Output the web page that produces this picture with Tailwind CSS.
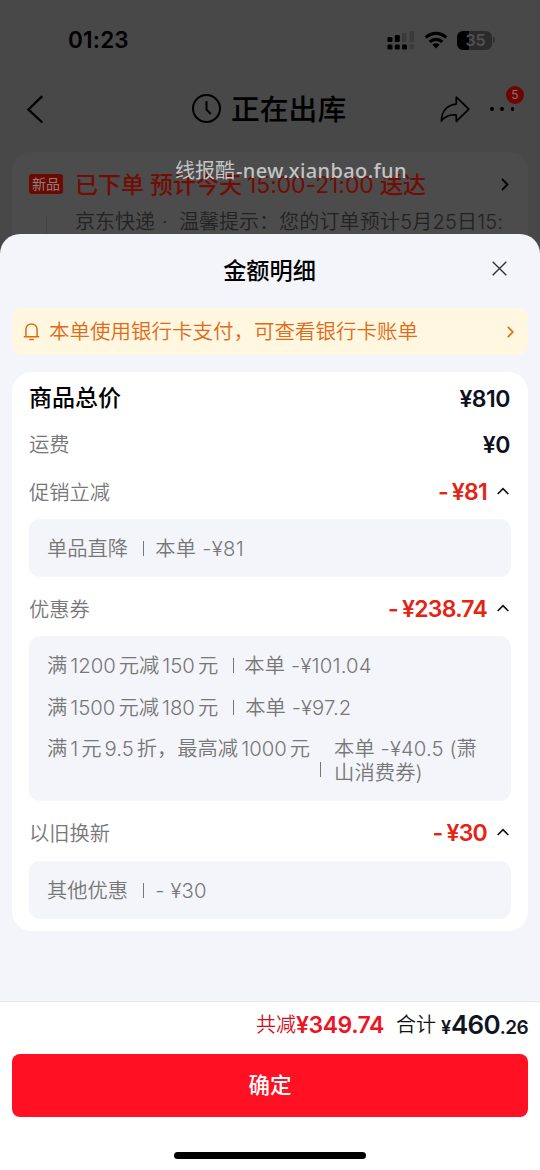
<!DOCTYPE html>
<html lang="zh-CN">
<head>
<meta charset="utf-8">
<title>金额明细</title>
<script src="https://cdn.jsdelivr.net/npm/@tailwindcss/browser@4"></script>
</head>
<body class="relative flex h-[1170px] w-[540px] flex-col overflow-hidden bg-[#484848] font-['Inter','Noto_Sans_CJK_SC',sans-serif] text-black">

<!-- Dimmed order page -->
<div class="h-[234px] shrink-0">
  <div class="flex h-20 items-center pl-[68px] pr-[45px]">
    <span class="pt-px text-[22.500px] font-semibold leading-none tracking-[0.2px]">01:23</span>
    <svg class="ml-auto h-[20px] w-[28px]" viewBox="0 0 28 20">
      <g fill="#000"><rect x="0.500" y="7" width="5" height="5" rx="1.300"/><rect x="7.800" y="5" width="5" height="7" rx="1.300"/><rect x="0.500" y="14.500" width="5" height="5" rx="1.300"/><rect x="7.800" y="14.500" width="5" height="5" rx="1.300"/><rect x="15" y="14.500" width="5" height="5" rx="1.300"/></g>
      <g fill="#3a3a3a"><rect x="15" y="3" width="4.500" height="9" rx="1.300"/><rect x="22.500" y="1" width="4.500" height="11" rx="1.300"/><rect x="22.500" y="14.500" width="4.500" height="5" rx="1.300"/></g>
    </svg>
    <svg class="ml-[9px] h-[18px] w-[24px]" viewBox="0 0 24 18" fill="none" stroke="#000" stroke-width="3.200">
      <path d="M1.800 6.600a14.600 14.600 0 0 1 20.400 0"/><path d="M5.700 10.900a9 9 0 0 1 12.600 0"/><path d="M12 17.400l-3.600-3.600a5.200 5.200 0 0 1 7.200 0z" fill="#000" stroke="none"/>
    </svg>
    <div class="ml-[9px] flex h-[19px] w-[35px] items-center justify-center rounded-[6px] bg-linear-to-r from-black from-35% to-[#2b2b2b] to-35% pl-[2px] text-[16px] font-semibold leading-none text-[#505050]">35</div>
    <div class="ml-px h-[6px] w-[2px] rounded-r bg-[#303030]"></div>
  </div>
  <div class="flex h-[72px] items-start">
    <svg class="ml-[26px] mt-[15px] h-[29px] w-[18px]" viewBox="0 0 18 29" fill="none" stroke="#000" stroke-width="2.400"><path d="M16.300 1.200 2.500 14.500l13.800 13"/></svg>
    <svg class="ml-[147px] mt-[13px] h-[31px] w-[31px]" viewBox="0 0 31 31" fill="none" stroke="#000" stroke-width="2"><circle cx="15.500" cy="15.500" r="13.500"/><path d="M15.500 8v8.500l4.300 4.500"/></svg>
    <span class="ml-[9px] mt-[10px] w-[115px] whitespace-nowrap text-[28.800px] font-medium leading-[40px]">正在出库</span>
    <svg class="ml-[94px] mt-[16px] h-[27px] w-[30px]" viewBox="0 0 30 27" fill="none" stroke="#000" stroke-width="1.700" stroke-linejoin="round"><path d="M16.300 1.200 28.800 13.200 16.300 25.300v-6.400C9.500 18.300 4.500 20.500 1.400 25c.2-9.500 5.500-16 14.900-16.900z"/></svg>
    <div class="relative ml-[20px] mt-[27px] flex gap-[6.500px]">
      <i class="size-[3.800px] rounded-full bg-black"></i><i class="size-[3.800px] rounded-full bg-black"></i><i class="size-[3.800px] rounded-full bg-black"></i>
      <b class="absolute -top-[21px] left-[16px] flex size-[18px] items-center justify-center rounded-full bg-[#700400] text-[12px] font-normal leading-none text-[#8b7070]">5</b>
    </div>
  </div>
  <div class="relative mx-3 h-[90px] rounded-t-[18px] bg-[#4c4c4c]">
    <div class="flex h-[64px] items-center pl-[17px] pr-[19px]">
      <span class="flex h-[20px] w-[34px] items-center justify-center rounded-[3px] bg-[#6d0a03] text-[14px] leading-none text-[#8d7f7e]">新品</span>
      <span class="ml-[12px] flex whitespace-nowrap pt-[2px] text-[23px] font-medium leading-none text-[#720c05]"><span class="w-[75px]">已下单</span><span class="w-[97px]">预计今天</span><span class="w-[133px] font-normal tracking-[-0.100px]">15:00-21:00</span><span>送达</span></span>
      <svg class="ml-auto h-[13px] w-[8px]" viewBox="0 0 8 13" fill="none" stroke="#000" stroke-width="1.900"><path d="M1 1l5.500 5.500L1 12"/></svg>
    </div>
    <div class="ml-[34px] flex h-[26px] items-start border-l border-[#434343] pl-[28px]"><span class="-mt-[6px] flex whitespace-nowrap text-[20px] font-[350] leading-[24px] text-[#222]"><span class="w-[87px]">京东快递</span><span class="w-[17px]">·</span><span class="w-[100px]">温馨提示：</span><span class="tracking-[0.200px]">您的订单预计5月25日15:</span></span></div>
  </div>
</div>

<!-- Price detail sheet -->
<main class="relative flex h-[936px] flex-col rounded-t-[20px] bg-[#f4f5fa]">
  <div class="flex h-[74px] items-center justify-center"><h1 class="-ml-px whitespace-nowrap text-[23.200px] font-medium">金额明细</h1></div>
  <svg class="absolute left-[492px] top-[27px] size-[15px]" viewBox="0 0 15 15" fill="none" stroke="#333" stroke-width="1.400"><path d="M.7.700l13.600 13.600M14.300.700.700 14.300"/></svg>

  <div class="mx-3 flex h-[47px] items-center rounded-[9px] bg-[#fff7df] pl-[11px] pr-[14px] text-[#df6a18]">
    <svg class="h-[19px] w-[17px]" viewBox="0 0 17 19" fill="none" stroke="currentColor" stroke-width="1.500"><path d="M.8 14.700h15.400M2.900 14.700V7.500a5.600 5.600 0 0 1 11.200 0v7.200M6.200 17.600h4.600"/></svg>
    <span class="ml-[9px] whitespace-nowrap pt-[2px] text-[20.500px] font-[350] leading-none">本单使用银行卡支付，可查看银行卡账单</span>
    <svg class="ml-auto h-[12px] w-[7px]" viewBox="0 0 7 12" fill="none" stroke="currentColor" stroke-width="1.700"><path d="M.8.800l5 5.200-5 5.200"/></svg>
  </div>

  <section class="mx-3 mt-[17px] h-[559px] rounded-[20px] bg-white px-[17px] pt-[3px] text-[20.300px] font-[350] leading-none text-[#777]">
    <div class="flex h-[46px] items-center justify-between pt-px text-black"><span class="text-[23px] font-medium">商品总价</span><span class="pr-px pt-px text-[23px] font-semibold tracking-[-0.500px] text-[#0d1020]">¥810</span></div>
    <div class="flex h-[47px] items-center justify-between pt-[2px]"><span>运费</span><span class="pr-px text-[23px] font-semibold tracking-[-0.500px] text-[#0d1020]">¥0</span></div>
    <div class="flex h-[48px] items-center pt-[2px]"><span>促销立减</span><span class="-mt-px ml-auto mr-[10px] text-[23px] font-semibold tracking-[-0.750px] text-[#e62213]"><span class="mr-1">-</span>¥81</span><svg class="-mt-1 mr-[2px] h-[8px] w-[12px]" viewBox="0 0 12 8" fill="none" stroke="#111" stroke-width="1.700"><path d="M.7 7 6 1.600 11.300 7"/></svg></div>
    <div class="mt-[3px] flex h-[58px] items-center rounded-[11px] bg-[#f4f5fa] pl-[18px]"><span class="pt-[2px]">单品直降</span><i class="ml-[15px] mr-[11px] h-[15px] w-px bg-[#777]"></i><span class="pt-[2px] tracking-[0.300px]">本单 -¥81</span></div>
    <div class="flex h-[59px] items-center pt-[7px]"><span>优惠券</span><span class="-mt-px ml-auto mr-[10px] text-[23px] font-semibold tracking-[-0.750px] text-[#e62213]"><span class="mr-1">-</span>¥238.74</span><svg class="-mt-1 mr-[2px] h-[8px] w-[12px]" viewBox="0 0 12 8" fill="none" stroke="#111" stroke-width="1.700"><path d="M.7 7 6 1.600 11.300 7"/></svg></div>
    <div class="h-[165px] rounded-[11px] bg-[#f4f5fa] pl-[18px] pt-[9px]">
      <div class="flex h-[41px] items-center whitespace-nowrap"><span class="flex gap-[3px] pt-[2px]"><span>满</span><span>1200</span><span>元减</span><span>150</span><span>元</span></span><i class="ml-[15px] mr-[10px] h-[15px] w-px bg-[#777]"></i><span class="pt-[2px] tracking-[0.200px]">本单 -¥101.04</span></div>
      <div class="flex h-[42px] items-center whitespace-nowrap"><span class="flex gap-[3px] pt-[2px]"><span>满</span><span>1500</span><span>元减</span><span>180</span><span>元</span></span><i class="ml-[15px] mr-[11px] h-[15px] w-px bg-[#777]"></i><span class="pt-[2px] tracking-[0.100px]">本单 -¥97.2</span></div>
      <div class="flex items-center whitespace-nowrap pt-[9px]"><span class="flex gap-[3px] self-start leading-[24px]"><span>满</span><span>1</span><span>元</span><span>9.5</span><span>折，最高减</span><span>1000</span><span>元</span></span><i class="ml-[10px] mr-[13px] mt-[16px] h-[15px] w-px bg-[#777]"></i><span class="leading-[24px] tracking-[0.100px]">本单 -¥40.5 (萧<br>山消费券)</span></div>
    </div>
    <div class="flex h-[60px] items-center pt-[6px]"><span>以旧换新</span><span class="-mt-px ml-auto mr-[10px] text-[23px] font-semibold tracking-[-0.750px] text-[#e62213]"><span class="mr-1">-</span>¥30</span><svg class="-mt-1 mr-[2px] h-[8px] w-[12px]" viewBox="0 0 12 8" fill="none" stroke="#111" stroke-width="1.700"><path d="M.7 7 6 1.600 11.300 7"/></svg></div>
    <div class="flex h-[58px] items-center rounded-[11px] bg-[#f4f5fa] pl-[18px]"><span class="pt-[2px]">其他优惠</span><i class="ml-[15px] mr-[11px] h-[15px] w-px bg-[#777]"></i><span class="pt-[2px] tracking-[0.200px]">- ¥30</span></div>
  </section>

  <footer class="mt-auto flex h-[169px] flex-col border-t border-[#e8e9eb] bg-white px-3">
    <div class="flex h-[51px] items-center justify-end pb-[5px] leading-none"><span class="text-[20px] font-[350] text-[#d40f1c]">共减</span><span class="text-[23px] font-semibold tracking-[-0.450px] text-[#ee1424]">¥349.74</span><span class="ml-[12px] mr-[5px] text-[20px] font-[350] text-[#111]">合计</span><span class="-mt-px flex items-baseline font-semibold text-[#111522]"><span class="text-[18px]">¥</span><span class="text-[26px] tracking-[-0.800px]">460</span><span class="text-[19px] tracking-[-0.600px]">.26</span></span></div>
    <button class="mt-px h-[63px] shrink-0 rounded-[8px] bg-[#ff1022] pt-px text-[21.500px] font-medium leading-none text-white">确定</button>
    <div class="mx-auto mt-[35px] h-[7px] w-[192px] rounded-full bg-black"></div>
  </footer>
</main>

<!-- Site watermark -->
<div class="absolute left-[175px] top-[159px] flex whitespace-nowrap font-['Noto_Sans','Noto_Sans_CJK_SC',sans-serif] text-[20px] leading-[24px] text-[#c4c4c4]"><span class="w-[61px]">线报酷</span><span class="font-medium tracking-[0.380px]">-new.xianbao.fun</span></div>
</body>
</html>
